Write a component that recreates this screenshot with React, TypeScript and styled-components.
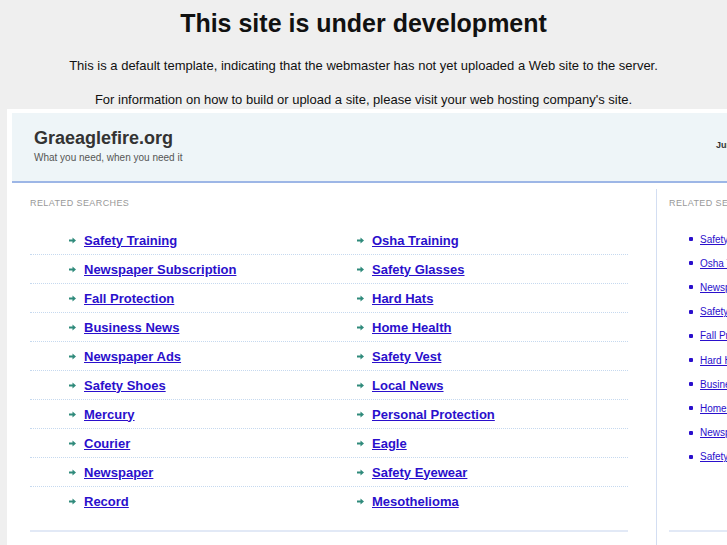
import styled, { createGlobalStyle } from "styled-components";

const GlobalStyle = createGlobalStyle`
  html, body {
    margin: 0;
    padding: 0;
    overflow: hidden;
    background: #efefef;
  }
  body {
    font-family: "Liberation Sans", Arial, sans-serif;
  }
`;

const Page = styled.div`
  width: 727px;
  height: 545px;
  overflow: hidden;
  background: #efefef;
`;

const Notice = styled.div`
  text-align: center;
  color: #111;
  padding-top: 9px;
`;

const Title = styled.h1`
  margin: 0;
  font-size: 25px;
  line-height: 28px;
  font-weight: bold;
`;

const Note = styled.p<{ $gap: number }>`
  margin: ${(p) => p.$gap}px 0 0;
  font-size: 13px;
  line-height: 16px;
`;

const Frame = styled.div`
  margin: 1px 0 0 7px;
  width: 1000px;
  height: 500px;
  background: #fff;
  padding: 4px 0 0 5px;
`;

const Header = styled.div`
  height: 68px;
  background: #eef5f8;
  border-bottom: 2px solid #9db6e6;
  display: grid;
  grid-template-columns: 704px 1fr;
`;

const Brand = styled.div`
  padding: 14px 0 0 22px;
`;

const SiteName = styled.div`
  font-size: 18px;
  line-height: 22px;
  font-weight: bold;
  color: #333;
`;

const Tagline = styled.div`
  margin-top: 3px;
  font-size: 10px;
  line-height: 12px;
  color: #555;
`;

const DateText = styled.div`
  padding-top: 27px;
  font-size: 9px;
  font-weight: bold;
  color: #333;
  white-space: nowrap;
`;

const Body = styled.div`
  display: flex;
`;

const Main = styled.div`
  width: 598px;
  padding: 15px 28px 0 18px;
`;

const Side = styled.div`
  margin-top: 6px;
  border-left: 1px solid #d3def2;
  padding: 9px 0 0 12px;
  width: 280px;
  height: 400px;
`;

const Label = styled.div`
  font-size: 9px;
  line-height: 11px;
  color: #999;
  letter-spacing: 0.4px;
  text-transform: uppercase;
  white-space: nowrap;
`;

const List = styled.div`
  margin-top: 17px;
  padding-bottom: 14px;
  border-bottom: 2px solid #e2e9f6;
`;

const Row = styled.div<{ $last: boolean }>`
  height: 28px;
  border-bottom: 1px dotted ${(p) => (p.$last ? "transparent" : "#c6d9ef")};
  display: grid;
  grid-template-columns: 288px 310px;
  align-items: center;
`;

const Cell = styled.div`
  display: flex;
  align-items: center;
  padding-left: 39px;
`;

const Arrow = styled.svg`
  width: 7px;
  height: 7px;
  margin-right: 8px;
  flex: none;
`;

const MainLink = styled.a`
  font-size: 13px;
  font-weight: bold;
  color: #2a0fcc;
  text-decoration: underline;
  white-space: nowrap;
`;

const SideList = styled.ul`
  list-style: none;
  margin: 18px 0 0;
  padding: 0 0 61px;
  border-bottom: 2px solid #e2e9f6;
`;

const SideItem = styled.li`
  height: 24.2px;
  display: flex;
  align-items: center;
  padding-left: 20px;
  &::before {
    content: "";
    width: 4px;
    height: 4px;
    border-radius: 1px;
    background: #2a0fcc;
    margin-right: 7px;
  }
`;

const SideLink = styled.a`
  font-size: 10px;
  color: #2a0fcc;
  text-decoration: underline;
  white-space: nowrap;
`;

const left = [
  "Safety Training",
  "Newspaper Subscription",
  "Fall Protection",
  "Business News",
  "Newspaper Ads",
  "Safety Shoes",
  "Mercury",
  "Courier",
  "Newspaper",
  "Record",
];

const right = [
  "Osha Training",
  "Safety Glasses",
  "Hard Hats",
  "Home Health",
  "Safety Vest",
  "Local News",
  "Personal Protection",
  "Eagle",
  "Safety Eyewear",
  "Mesothelioma",
];

const side = [
  "Safety Training",
  "Osha Training",
  "Newspaper Subscription",
  "Safety Glasses",
  "Fall Protection",
  "Hard Hats",
  "Business News",
  "Home Health",
  "Newspaper Ads",
  "Safety Vest",
];

const ArrowIcon = () => (
  <Arrow viewBox="0 0 7 7">
    <path d="M0 2.5h3.5V0.5L7 3.5 3.5 6.5V4.5H0z" fill="#2f8a7b" />
  </Arrow>
);

export default function App() {
  return (
    <Page>
      <GlobalStyle />
      <Notice>
        <Title>This site is under development</Title>
        <Note $gap={21}>
          This is a default template, indicating that the webmaster has not yet uploaded a Web site to the server.
        </Note>
        <Note $gap={18}>
          For information on how to build or upload a site, please visit your web hosting company's site.
        </Note>
      </Notice>
      <Frame>
        <Header>
          <Brand>
            <SiteName>Graeaglefire.org</SiteName>
            <Tagline>What you need, when you need it</Tagline>
          </Brand>
          <DateText>June 22, 2012</DateText>
        </Header>
        <Body>
          <Main>
            <Label>Related Searches</Label>
            <List>
              {left.map((l, i) => (
                <Row key={l} $last={i === left.length - 1}>
                  <Cell>
                    <ArrowIcon />
                    <MainLink href="#">{l}</MainLink>
                  </Cell>
                  <Cell>
                    <ArrowIcon />
                    <MainLink href="#">{right[i]}</MainLink>
                  </Cell>
                </Row>
              ))}
            </List>
          </Main>
          <Side>
            <Label>Related Searches</Label>
            <SideList>
              {side.map((s) => (
                <SideItem key={s}>
                  <SideLink href="#">{s}</SideLink>
                </SideItem>
              ))}
            </SideList>
          </Side>
        </Body>
      </Frame>
    </Page>
  );
}
